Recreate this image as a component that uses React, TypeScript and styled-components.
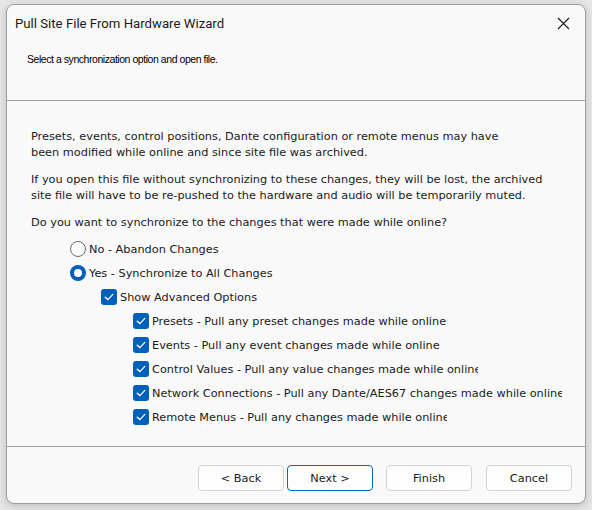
import React from "react";
import styled, { createGlobalStyle, css } from "styled-components";

const Global = createGlobalStyle`
  html, body { margin: 0; padding: 0; background: #e3e3e3; }
  body { width: 592px; height: 510px; overflow: hidden; }
  * { box-sizing: border-box; }
`;

const Backdrop = styled.div`
  width: 592px;
  height: 510px;
  padding: 4px 6px 0 6px;
  background: #e6e6e6;
`;

const Window = styled.div`
  width: 580px;
  height: 500px;
  border: 1px solid #9c9c9c;
  border-radius: 8px;
  background: #f9f9f9;
  box-shadow: 0 2px 8px rgba(0, 0, 0, 0.18);
  display: flex;
  flex-direction: column;
  overflow: hidden;
`;

const TitleBar = styled.div`
  height: 37px;
  display: flex;
  align-items: center;
  justify-content: space-between;
  padding: 0 14px 0 8px;
`;

const Title = styled.div`
  font-family: Roboto, "Noto Sans", sans-serif;
  font-size: 13.2px;
  color: #1a1a1a;
`;

const CloseButton = styled.div`
  width: 16px;
  height: 16px;
  display: flex;
  align-items: center;
  justify-content: center;
`;

const Header = styled.div`
  height: 58px;
  padding: 11px 0 0 20px;
`;

const Subtitle = styled.div`
  font-family: "Liberation Sans", Arial, sans-serif;
  font-size: 10.5px;
  letter-spacing: -0.45px;
  line-height: 13px;
  color: #000;
`;

const Divider = styled.div`
  height: 1px;
  background: #a0a0a0;
  flex: none;
`;

const Body = styled.div`
  height: 345px;
  padding: 28px 0 0 24px;
  overflow: hidden;
  display: flex;
  flex-direction: column;
  font-family: "DejaVu Sans", Tahoma, sans-serif;
  font-size: 11.3px;
  color: #1a1a1a;
`;

const Para = styled.p<{ $after?: number }>`
  margin: 0 0 ${(p) => p.$after ?? 11}px 0;
  line-height: 16px;
`;

const Options = styled.div`
  display: flex;
  flex-direction: column;
`;

const Row = styled.div<{ $indent: number }>`
  height: 24px;
  flex: none;
  display: flex;
  align-items: center;
  padding-left: ${(p) => p.$indent}px;
`;

const Label = styled.span<{ $width?: number }>`
  margin-left: 3px;
  white-space: nowrap;
  overflow: hidden;
  ${(p) =>
    p.$width &&
    css`
      width: ${p.$width}px;
    `}
`;

const Radio = styled.span<{ $checked?: boolean }>`
  width: 16px;
  height: 16px;
  border-radius: 50%;
  flex: none;
  display: inline-flex;
  align-items: center;
  justify-content: center;
  ${(p) =>
    p.$checked
      ? css`
          background: #005fb8;
          &::after {
            content: "";
            width: 8px;
            height: 8px;
            border-radius: 50%;
            background: #fff;
          }
        `
      : css`
          border: 1px solid #6a6a6a;
          background: #fbfbfb;
        `}
`;

const Check = styled.span`
  width: 16px;
  height: 16px;
  border-radius: 3px;
  background: #005fb8;
  flex: none;
  display: inline-flex;
  align-items: center;
  justify-content: center;
`;

const Footer = styled.div`
  flex: 1;
  display: flex;
  justify-content: flex-end;
  padding: 18px 13px 0 0;
`;

const Button = styled.button<{ $primary?: boolean; $gap?: number }>`
  width: 86px;
  height: 26px;
  margin-left: ${(p) => p.$gap ?? 0}px;
  border-radius: 4px;
  background: #fdfdfd;
  border: 1px solid ${(p) => (p.$primary ? "#0067c0" : "#d3d3d3")};
  font-family: "DejaVu Sans", Tahoma, sans-serif;
  font-size: 11.3px;
  color: #1a1a1a;
  padding: 0;
`;

const CheckMark = () => (
  <svg width="10" height="8" viewBox="0 0 10 8">
    <path d="M1.2 4.2 L3.8 6.6 L8.8 1.4" fill="none" stroke="#fff" strokeWidth="1.3" strokeLinecap="round" strokeLinejoin="round" />
  </svg>
);

const advanced: { text: string; width?: number }[] = [
  { text: "Presets - Pull any preset changes made while online" },
  { text: "Events - Pull any event changes made while online" },
  { text: "Control Values - Pull any value changes made while online", width: 326 },
  { text: "Network Connections - Pull any Dante/AES67 changes made while online", width: 410 },
  { text: "Remote Menus - Pull any changes made while online", width: 295 },
];

export default function App() {
  return (
    <>
      <Global />
      <Backdrop>
        <Window>
          <TitleBar>
            <Title>Pull Site File From Hardware Wizard</Title>
            <CloseButton>
              <svg width="13" height="13" viewBox="0 0 13 13">
                <path d="M1 1 L12 12 M12 1 L1 12" stroke="#1a1a1a" strokeWidth="1.1" />
              </svg>
            </CloseButton>
          </TitleBar>
          <Header>
            <Subtitle>Select a synchronization option and open file.</Subtitle>
          </Header>
          <Divider />
          <Body>
            <Para>
              Presets, events, control positions, Dante configuration or remote menus may have
              <br />
              been modified while online and since site file was archived.
            </Para>
            <Para>
              If you open this file without synchronizing to these changes, they will be lost, the archived
              <br />
              site file will have to be re-pushed to the hardware and audio will be temporarily muted.
            </Para>
            <Para $after={6}>Do you want to synchronize to the changes that were made while online?</Para>
            <Options>
              <Row $indent={39}>
                <Radio />
                <Label>No - Abandon Changes</Label>
              </Row>
              <Row $indent={39}>
                <Radio $checked />
                <Label>Yes - Synchronize to All Changes</Label>
              </Row>
              <Row $indent={70}>
                <Check>
                  <CheckMark />
                </Check>
                <Label>Show Advanced Options</Label>
              </Row>
              {advanced.map((a) => (
                <Row $indent={102} key={a.text}>
                  <Check>
                    <CheckMark />
                  </Check>
                  <Label $width={a.width}>{a.text}</Label>
                </Row>
              ))}
            </Options>
          </Body>
          <Divider />
          <Footer>
            <Button>&lt; Back</Button>
            <Button $primary $gap={3}>Next &gt;</Button>
            <Button $gap={13}>Finish</Button>
            <Button $gap={14}>Cancel</Button>
          </Footer>
        </Window>
      </Backdrop>
    </>
  );
}
